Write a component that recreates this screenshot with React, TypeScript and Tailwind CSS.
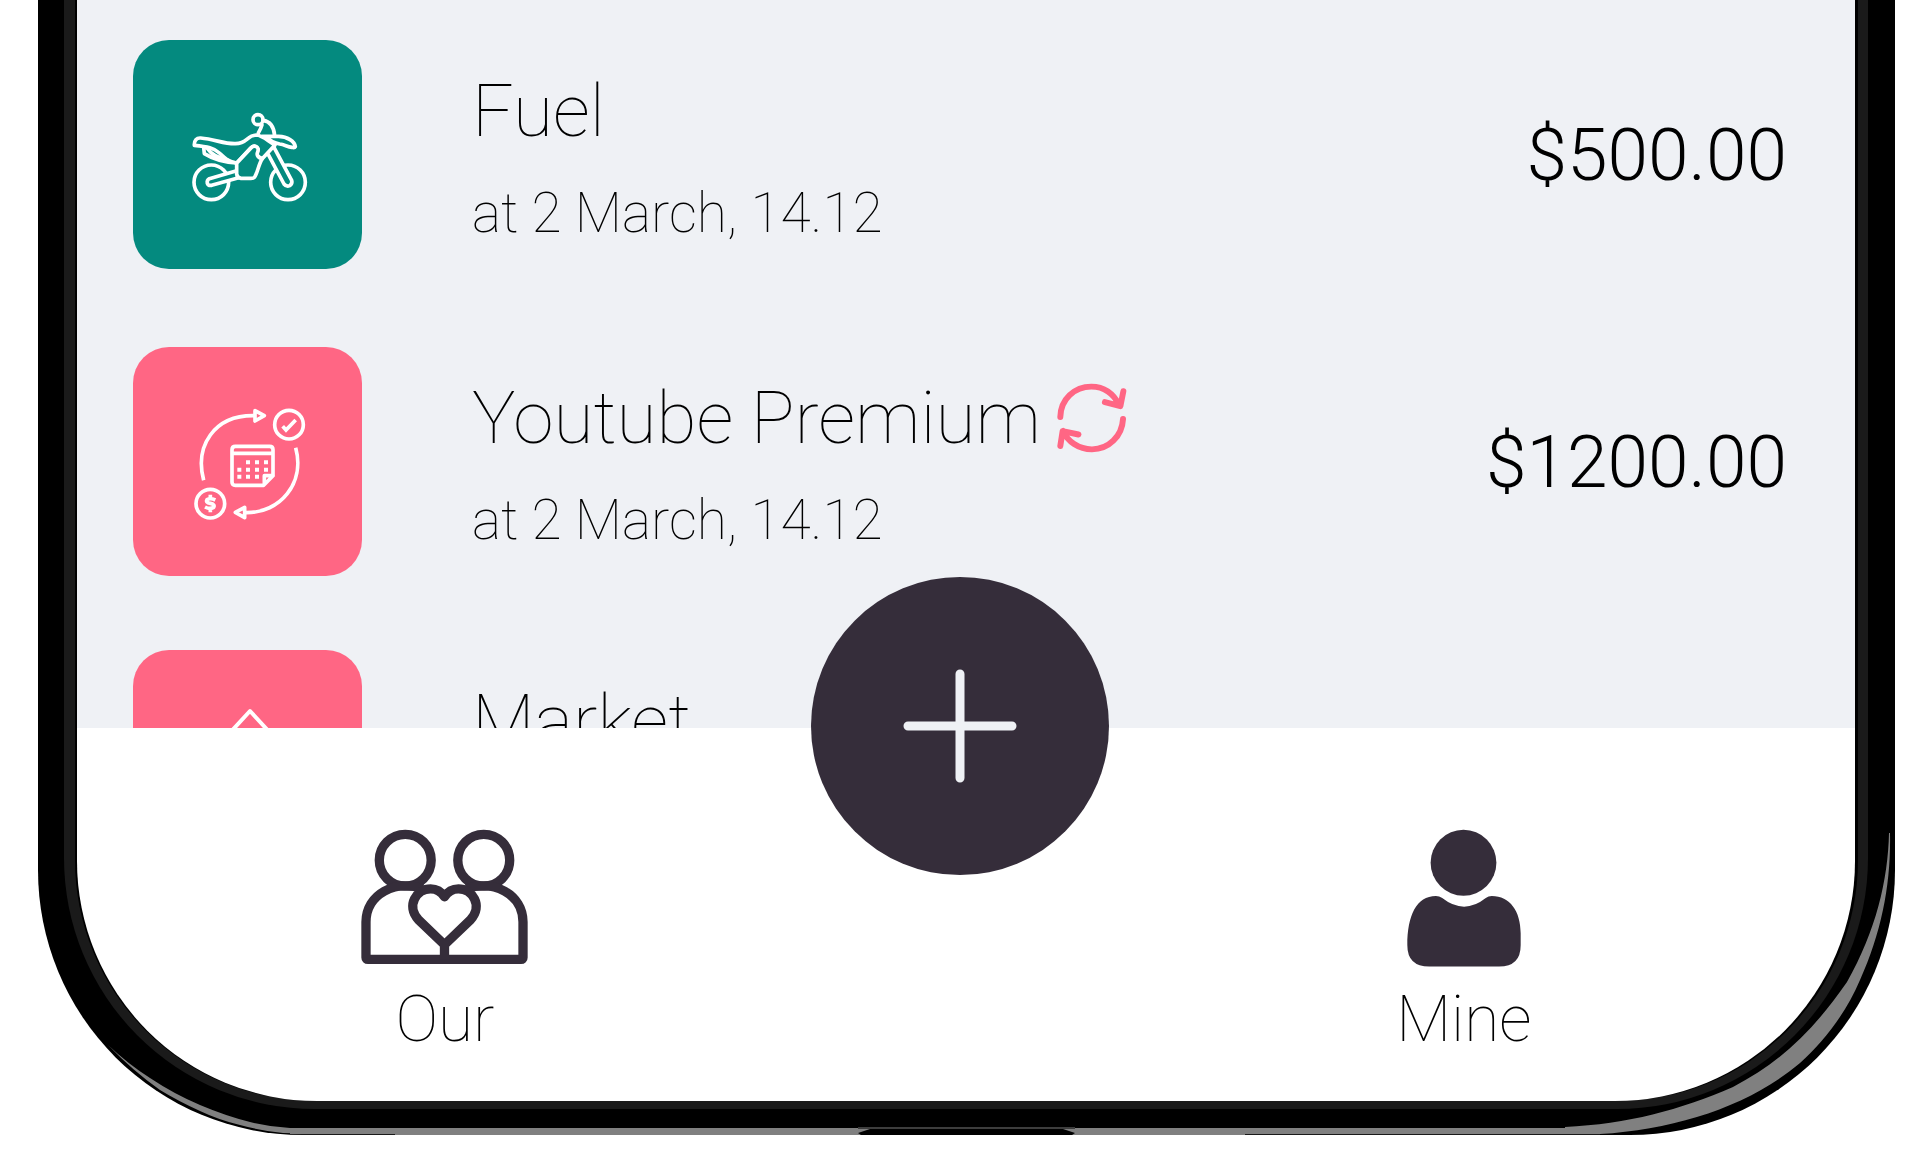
import type { ReactNode } from "react"

const MotorbikeIcon = () => (
    <svg viewBox="38 30 687 687" className="size-full" fill="none" stroke="white" strokeWidth="11" strokeLinecap="round" strokeLinejoin="round" aria-hidden="true">
        <circle cx="273" cy="457" r="52" />
        <circle cx="503" cy="457" r="52" />
        <path d="M349 422L267 446Q259 450 261 460Q264 468 274 466L355 443" fill="#048a7f" />
        <path d="M444 374L491 462Q498 471 508 467Q517 461 514 451L461 352" fill="#048a7f" />
        <path d="M222 346C221 331 229 323 241 324C285 328 310 342 345 341C383 340 377 317 408 315C422 315 434 326 464 345L425 387L408 375L413 357Q402 341 391 354L349 399C322 395 312 383 297 369C281 354 262 350 222 346Z" fill="#048a7f" />
        <path d="M250 352L252 371C276 386 310 396 347 399M260 354C273 374 293 382 322 390" />
        <path d="M349 400L392 354Q402 344 411 352Q416 358 411 369Q408 381 425 387C414 406 411 430 403 441Q400 445 392 445H362Q350 443 349 432Z" fill="#048a7f" />
        <circle cx="413" cy="269" r="15" />
        <path d="M428 271C451 274 461 293 463 317M425 284C422 295 419 300 414 309M426 319H475C501 320 523 334 525 350Q523 354 515 352C500 350 493 344 478 342C461 339 448 331 438 321" />
    </svg>
)

const SubscriptionIcon = () => (
    <svg viewBox="38 22 687 687" className="size-full" fill="none" stroke="white" strokeWidth="11" strokeLinejoin="round" aria-hidden="true">
        <path d="M250 422C223 320 280 226 402 228M526 324C555 430 480 521 376 519" />
        <path d="M404 213L432 228L404 244ZM373 503L345 518L373 534Z" />
        <circle cx="506" cy="255" r="43" />
        <circle cx="270" cy="492" r="43" />
        <path d="M487 260L497 271L526 241" strokeLinejoin="miter" />
        <path d="M285 481Q270 474 260 480Q255 488 270 491Q285 494 280 503Q269 510 254 502M270 465V477M270 506V518" />
        <path d="M458 408V330Q458 320 448 320H345Q335 320 335 330V427Q335 437 345 437H430L458 408H432V437M335 341H458" />
        <path d="M383 362v12M410 362v12M437 362v12M357 384v12M383 384v12M410 384v12M437 384v12M357 405v12M383 405v12M410 405v12" strokeWidth="12" />
    </svg>
)

const MarketIcon = () => (
    <svg viewBox="0 0 229 229" className="size-full" fill="none" stroke="white" strokeWidth="4" strokeLinejoin="round" aria-hidden="true">
        <path d="M94 86L117 61L140 86M70 86H164L154 158H80Z" />
    </svg>
)

const RepeatIcon = () => (
    <svg viewBox="84 39 212 212" className="size-[70px]" fill="none" stroke="#ff6684" strokeWidth="18" strokeLinecap="round" strokeLinejoin="round" role="img" aria-label="Repeats">
        <path d="M94 142C95 88 137 50 188 50C232 50 258 76 274 108M229 97L276 109L285 64" />
        <path d="M284 148C281 201 240 240 190 240C149 240 116 216 102 184M149 195L101 185L94 230" />
    </svg>
)

const CoupleIcon = () => (
    <svg viewBox="65 55 502 407" className="h-[136px] w-[167px]" fill="none" stroke="#352d3a" strokeWidth="28" strokeLinejoin="round" aria-hidden="true">
        <circle cx="198" cy="148" r="78" />
        <circle cx="434" cy="148" r="78" />
        <path d="M250 234C170 204 80 250 80 334V440Q80 446 86 446H546Q552 446 552 440V334C552 250 462 204 382 234" />
        <path d="M316 402L238 327C198 283 234 234 274 234Q301 234 316 258Q331 234 358 234C398 234 434 283 394 327ZM316 402V446" />
    </svg>
)

const PersonIcon = () => (
    <svg viewBox="81 55 343 414" className="h-[138px] w-[114px]" fill="#352d3a" aria-hidden="true">
        <circle cx="251" cy="156" r="99" />
        <path d="M168 256Q178 256 187 262Q253 314 318 262Q326 256 336 256C391 256 423 302 423 368V404Q423 468 358 468H148Q82 468 82 404C82 315 109 256 168 256Z" />
    </svg>
)

type Expense = {
    title: string
    date: string
    amount: string
    color: string
    icon: ReactNode
    repeats?: boolean
}

const recent: Expense[] = [
    { title: "Fuel", date: "at 2 March, 14.12", amount: "$500.00", color: "bg-[#048a7f]", icon: <MotorbikeIcon /> },
    { title: "Youtube Premium", date: "at 2 March, 14.12", amount: "$1200.00", color: "bg-[#ff6684]", icon: <SubscriptionIcon />, repeats: true },
]

const earlier: Expense[] = [
    { title: "Market", date: "at 2 March, 14.12", amount: "$1200.00", color: "bg-[#ff6684]", icon: <MarketIcon /> },
]

const ExpenseRow = ({ expense }: { expense: Expense }) => (
    <li className="flex items-center">
        <div className={`size-[229px] shrink-0 overflow-hidden rounded-[36px] ${expense.color}`}>
            {expense.icon}
        </div>
        <div className="ml-[110px] flex-1 pt-1 font-thin whitespace-nowrap">
            <div className="flex items-center gap-4">
                <h2 className="text-[73px] leading-[84px]">{expense.title}</h2>
                {expense.repeats && <RepeatIcon />}
            </div>
            <p className="mt-7 text-[55px] leading-[64px]">{expense.date}</p>
        </div>
        <span className="text-[73px] leading-[84px] font-light">{expense.amount}</span>
    </li>
)

const NavButton = ({ label, icon }: { label: string, icon: ReactNode }) => (
    <button type="button" className="flex w-[167px] flex-col items-center gap-4 text-[64px] leading-[74px] font-thin">
        <span className="flex h-[138px] items-start">{icon}</span>
        {label}
    </button>
)

// reflections on the rim and the charging port
const Rim = () => (
    <div aria-hidden="true">
        <div className="absolute right-[295px] bottom-0 left-[252px] h-[7px] bg-[#808080]" />
        <div className="absolute bottom-0 left-[820px] flex w-[217px] justify-center">
            <svg viewBox="0 0 217 8" className="h-2 w-full">
                <path d="M0 0H217V2H0Z" fill="#3d3d3d" />
                <path d="M12 2H205L217 6L214 8H3L0 6Z" fill="black" />
            </svg>
        </div>
        <svg viewBox="38 1035 300 100" className="absolute bottom-0 left-0 h-[100px] w-[300px]" fill="#808080">
            <path d="M108 1045Q128 1064 150 1078Q174 1094 200 1105Q226 1116 250 1122Q270 1127 290 1128H338V1134Q310 1134 283 1133Q262 1131 240 1125Q219 1120 200 1111Q178 1101 160 1090Q133 1071 108 1045Z" />
        </svg>
        <svg viewBox="1565 825 330 310" className="absolute right-0 bottom-0 h-[310px] w-[330px]" fill="#808080">
            <path d="M1890 833C1891 883 1882 931 1860 980C1845 1015 1823 1042 1800 1063C1749 1106 1677 1129 1600 1134H1565V1127C1628 1124 1680 1110 1733 1087C1783 1061 1815 1028 1847 982C1876 931 1888 880 1889 833Z" />
        </svg>
        <div className="absolute bottom-0 left-[252px] h-px w-[105px] bg-[#1a1a1a]" />
        <div className="absolute right-[295px] bottom-0 h-px w-[355px] bg-[#1a1a1a]" />
    </div>
)

const App = () => {
    return (
        <main className="relative bg-white pb-6 font-[Roboto,sans-serif] text-black">
            <div className="relative mr-[25px] ml-[38px] overflow-hidden rounded-b-[265px] bg-black pr-[27px] pb-[26px] pl-[26px]">
                <Rim />
                <div className="relative rounded-b-[251px] bg-[#1a1a1a] pr-[10px] pb-2 pl-[11px]">
                    <div className="rounded-b-[241px] bg-black pr-[3px] pl-[2px]">
                        <div className="overflow-hidden rounded-b-[240px] bg-white">
                            <section className="h-[728px] overflow-hidden bg-[#eff1f5] pt-10 pr-[68px] pl-14">
                                <ul className="space-y-[78px]">
                                    {recent.map((expense) => <ExpenseRow key={expense.title} expense={expense} />)}
                                </ul>
                                <ul className="mt-[74px]">
                                    {earlier.map((expense) => <ExpenseRow key={expense.title} expense={expense} />)}
                                </ul>
                            </section>
                            <nav className="flex h-[373px] items-start justify-between pt-[101px] pr-[17.3%] pl-[16%]">
                                <NavButton label="Our" icon={<CoupleIcon />} />
                                <NavButton label="Mine" icon={<PersonIcon />} />
                            </nav>
                        </div>
                    </div>
                </div>
            </div>
            <button type="button" aria-label="Add expense" className="absolute top-[577px] left-1/2 flex size-[298px] -translate-x-1/2 items-center justify-center rounded-full bg-[#352d3a]">
                <svg viewBox="0 0 114 114" className="size-[114px]" fill="none" stroke="#eff1f5" strokeWidth="9" strokeLinecap="round" aria-hidden="true">
                    <path d="M57 5V109M5 57H109" />
                </svg>
            </button>
        </main>
    )
}

export default App
